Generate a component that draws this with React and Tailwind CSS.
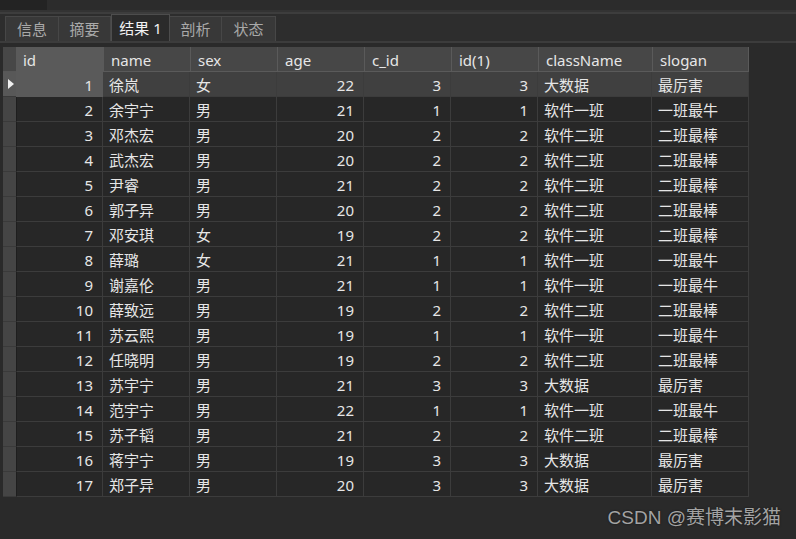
import React from 'react';

const rows = [
  [1, '徐岚', '女', 22, 3, 3, '大数据', '最厉害'],
  [2, '余宇宁', '男', 21, 1, 1, '软件一班', '一班最牛'],
  [3, '邓杰宏', '男', 20, 2, 2, '软件二班', '二班最棒'],
  [4, '武杰宏', '男', 20, 2, 2, '软件二班', '二班最棒'],
  [5, '尹睿', '男', 21, 2, 2, '软件二班', '二班最棒'],
  [6, '郭子异', '男', 20, 2, 2, '软件二班', '二班最棒'],
  [7, '邓安琪', '女', 19, 2, 2, '软件二班', '二班最棒'],
  [8, '薛璐', '女', 21, 1, 1, '软件一班', '一班最牛'],
  [9, '谢嘉伦', '男', 21, 1, 1, '软件一班', '一班最牛'],
  [10, '薛致远', '男', 19, 2, 2, '软件二班', '二班最棒'],
  [11, '苏云熙', '男', 19, 1, 1, '软件一班', '一班最牛'],
  [12, '任晓明', '男', 19, 2, 2, '软件二班', '二班最棒'],
  [13, '苏宇宁', '男', 21, 3, 3, '大数据', '最厉害'],
  [14, '范宇宁', '男', 22, 1, 1, '软件一班', '一班最牛'],
  [15, '苏子韬', '男', 21, 2, 2, '软件二班', '二班最棒'],
  [16, '蒋宇宁', '男', 19, 3, 3, '大数据', '最厉害'],
  [17, '郑子异', '男', 20, 3, 3, '大数据', '最厉害'],
];

const headers = ['id', 'name', 'sex', 'age', 'c_id', 'id(1)', 'className', 'slogan'];
// numeric columns are right aligned
const numeric = [true, false, false, true, true, true, false, false];

const tabs = [
  { label: '信息', w: 'w-[54px]' },
  { label: '摘要', w: 'w-[52px]' },
  { label: '结果 1', w: 'w-[59px]', active: true },
  { label: '剖析', w: 'w-[52px]' },
  { label: '状态', w: 'w-[54px]' },
];

function Tab({ label, w, active }) {
  if (active) {
    return (
      <div className={`${w} h-[27px] flex items-center justify-center border border-b-0 border-[#4d4d4d] bg-[#2b2b2b] text-[15px] text-[#f2f2f2]`}>
        {label}
      </div>
    );
  }
  return (
    <div className={`${w} h-[25px] flex items-center justify-center border-t border-r border-[#474747] first:border-l bg-[#383838] text-[15px] text-[#a9a9a9]`}>
      {label}
    </div>
  );
}

export default function App() {
  return (
    <div
      className="relative w-[796px] h-[539px] overflow-hidden bg-[#2a2a2a] flex flex-col"
      style={{ fontFamily: '"Noto Sans", "Noto Sans CJK SC", sans-serif' }}
    >
      <div className="h-[10px] flex">
        <div className="w-[47px] bg-[#232323]" />
        <div className="flex-1 bg-[#2c2c2c]" />
      </div>
      <div className="h-[2px] bg-[#333333]" />
      <div className="h-[2px] bg-[#3d3d3d]" />

      <div className="h-[27px] flex items-end pl-[5px] bg-[#2d2d2d]">
        {tabs.map((t) => (
          <Tab key={t.label} {...t} />
        ))}
      </div>
      <div className="h-[2px] bg-[#3c3c3c]" />

      <div className="mt-[4px] ml-[3px] w-[746px] grid grid-cols-[13px_87px_87px_87px_87px_87px_87px_114px_97px] text-[15px] leading-none text-[#e6e6e6]">
        <div className="h-[25px] bg-[#474747] border-b border-[#575757]" />
        {headers.map((h, i) => (
          <div
            key={h}
            className={`h-[25px] flex items-center pt-[2px] pl-[7px] border-b ${
              i === 0 ? 'bg-[#5a5a5a] border-[#5a5a5a]' : 'bg-[#474747] border-l border-[#5a5a5a]'
            } ${i === headers.length - 1 ? 'border-r' : ''}`}
          >
            {h}
          </div>
        ))}

        {rows.map((r, ri) => {
          const sel = ri === 0;
          return (
            <React.Fragment key={r[0]}>
              <div
                className={`h-[25px] flex items-center pl-[5px] border-b border-[#3a3a3a] ${
                  sel ? 'bg-[#585858]' : 'bg-[#454545]'
                }`}
              >
                {sel && (
                  <svg width="6" height="10" viewBox="0 0 6 10">
                    <path d="M0 0 L6 5 L0 10 Z" fill="#f0f0f0" />
                  </svg>
                )}
              </div>
              {r.map((v, ci) => (
                <div
                  key={ci}
                  className={`h-[25px] flex items-center pt-[2px] border-b border-r border-[#3c3c3c] ${
                    numeric[ci] ? 'justify-end pr-[9px]' : 'pl-[6px]'
                  } ${
                    sel ? (ci === 0 ? 'bg-[#5a5a5a] border-[#5a5a5a]' : 'bg-[#404040]') : 'bg-[#272727]'
                  } ${ci === 0 && !sel ? 'border-l border-l-[#1e1e1e]' : ''}`}
                >
                  {v}
                </div>
              ))}
            </React.Fragment>
          );
        })}
      </div>

      <div
        className="absolute right-[15px] bottom-[7px] text-[19px] text-[#a3a3a3] [text-shadow:0_0_2px_rgba(0,0,0,0.6)]"
        style={{ fontFamily: '"Liberation Sans", "Noto Sans CJK SC", sans-serif' }}
      >
        CSDN @赛博末影猫
      </div>
    </div>
  );
}
